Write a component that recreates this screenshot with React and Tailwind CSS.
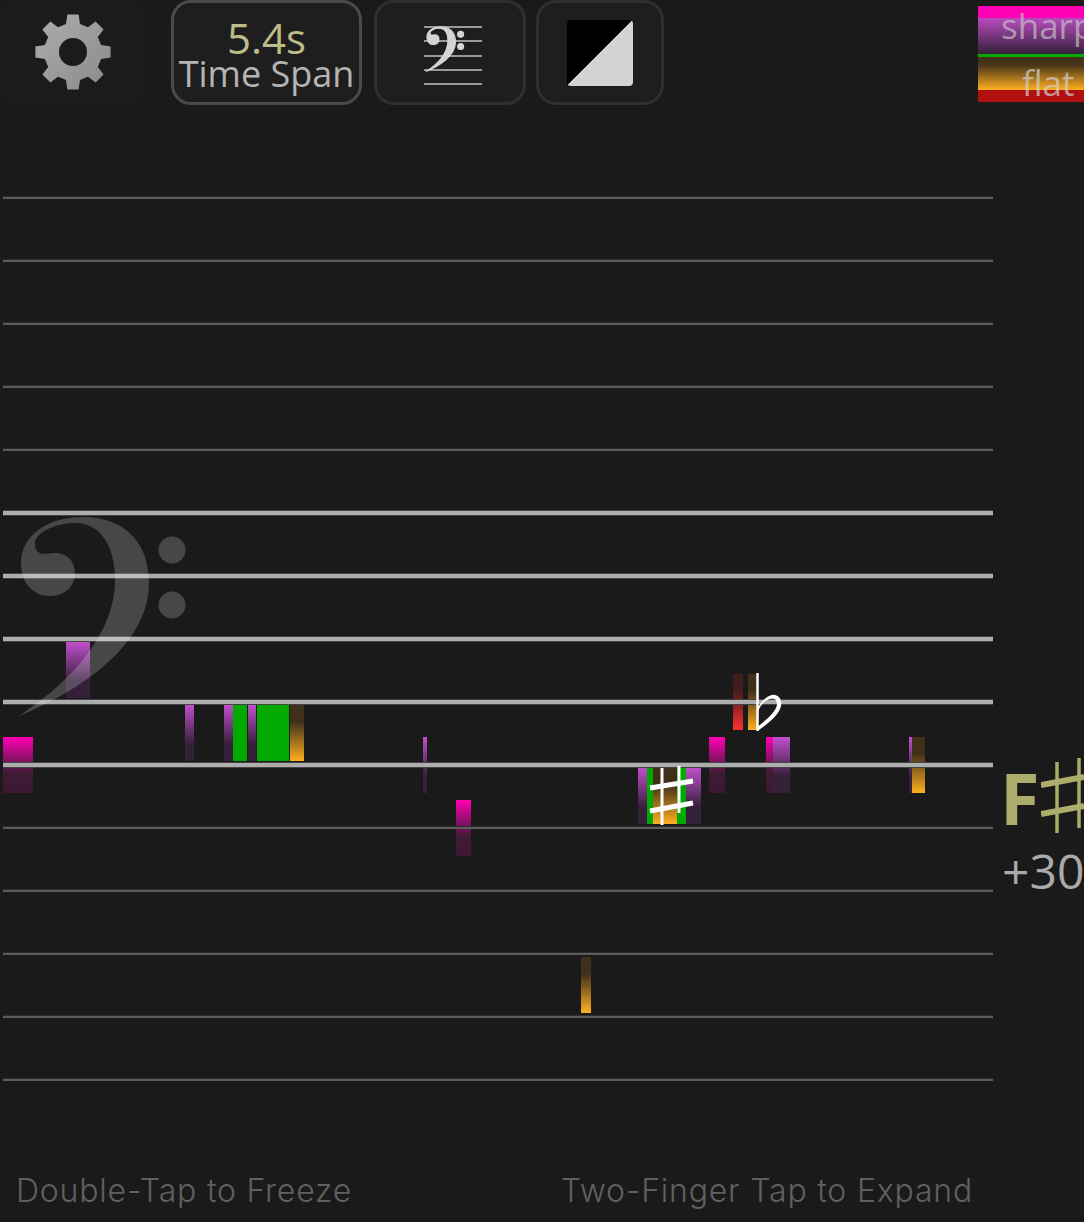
import React from "react";

const CLEF =
  "M17,717 C70,695 149,650 149,583 C149,540 122,517 83,517 C48,517 21,535 21,563 C21,583 33,596 50,596 C65,596 75,586 75,573 C75,560 66,553 55,553 C47,553 35,558 35,543 C35,533 55,523 75,523 C100,523 115,545 115,580 C115,640 60,690 17,717 Z";

// notes sit on a free canvas, coordinates are the content here
const NOTES = [
  { x: 3, w: 30, y: 737, kind: "magenta" },
  { x: 66, w: 24, y: 642, kind: "purple" },
  { x: 185, w: 9, y: 705, kind: "purple" },
  { x: 224, w: 9, y: 705, kind: "purple" },
  { x: 233, w: 14, y: 705, kind: "green" },
  { x: 248, w: 8, y: 705, kind: "purple" },
  { x: 257, w: 32, y: 705, kind: "green" },
  { x: 290, w: 14, y: 705, kind: "amber" },
  { x: 423, w: 4, y: 737, kind: "purple" },
  { x: 456, w: 15, y: 800, kind: "magenta" },
  { x: 581, w: 10, y: 957, kind: "amber" },
  { x: 638, w: 9, y: 768, kind: "purple" },
  { x: 647, w: 6, y: 768, kind: "green" },
  { x: 653, w: 24, y: 768, kind: "amber" },
  { x: 677, w: 9, y: 768, kind: "green" },
  { x: 686, w: 15, y: 768, kind: "purple" },
  { x: 709, w: 16, y: 737, kind: "magenta" },
  { x: 733, w: 10, y: 674, kind: "red" },
  { x: 748, w: 9, y: 674, kind: "amber" },
  { x: 766, w: 7, y: 737, kind: "magenta" },
  { x: 773, w: 17, y: 737, kind: "purple" },
  { x: 909, w: 3, y: 737, kind: "purple" },
  { x: 912, w: 13, y: 737, kind: "amber" },
];

const NOTE_CLASS = {
  magenta: "bg-linear-to-b/srgb from-[#ff00b4] via-[#3f1a35] via-[65%] to-[#3e1734]",
  purple: "bg-linear-to-b/srgb from-[#c050cc] via-[#35203a] via-[70%] to-[#35203a]",
  amber: "bg-linear-to-t/srgb from-[#ffb020] via-[#40301a] via-[70%] to-[#40301a]",
  red: "bg-linear-to-t/srgb from-[#ff3030] via-[#401c1c] via-[70%] to-[#401c1c]",
  green: "bg-[#00aa00]",
};

function gearPath() {
  const teeth = 8;
  const pts = [];
  for (let i = 0; i < teeth; i++) {
    const a = (i * Math.PI * 2) / teeth - Math.PI / 2;
    const step = Math.PI / teeth;
    [
      [-0.62, 29],
      [-0.38, 38],
      [0.38, 38],
      [0.62, 29],
    ].forEach(([k, r]) => {
      const t = a + k * step;
      pts.push(`${(40 + r * Math.cos(t)).toFixed(1)},${(40 + r * Math.sin(t)).toFixed(1)}`);
    });
  }
  return `M${pts.join(" L")} Z M54,40 A14,14 0 1,0 26,40 A14,14 0 1,0 54,40 Z`;
}

function Gear() {
  return (
    <svg viewBox="0 0 80 80" className="h-20 w-20">
      <defs>
        <linearGradient id="gear" x1="0" y1="0" x2="1" y2="1">
          <stop offset="0" stopColor="#adadad" />
          <stop offset="1" stopColor="#8a8a8a" />
        </linearGradient>
      </defs>
      <path d={gearPath()} fill="url(#gear)" fillRule="evenodd" />
    </svg>
  );
}

function Clef({ className, fill, stroke }) {
  return (
    <svg viewBox="17 513 170 206" className={className}>
      <path d={CLEF} fill={fill} stroke={stroke} strokeWidth="5" />
      <circle cx="172" cy="550" r="13.5" fill={fill} stroke={stroke} strokeWidth="5" />
      <circle cx="172" cy="605" r="13.5" fill={fill} stroke={stroke} strokeWidth="5" />
    </svg>
  );
}

function SmallClefIcon() {
  return (
    <div className="relative ml-[6px] mt-[6px] flex h-[59px] w-[58px] flex-col justify-between">
      {[0, 1, 2, 3, 4].map((i) => (
        <div key={i} className="h-[2px] bg-[#999999]" />
      ))}
      <Clef className="absolute left-[2px] top-0 h-[46px] w-[38px] overflow-visible" fill="#d4d4d4" stroke="#d4d4d4" />
    </div>
  );
}

function Sharp({ className }) {
  return (
    <svg viewBox="0 0 50 64" className={className}>
      <g stroke="#ffffff" fill="none">
        <path d="M17 4 V61" strokeWidth="3" />
        <path d="M34 2 V49" strokeWidth="3" />
        <path d="M5 24 L48 17" strokeWidth="5" />
        <path d="M5 47 L48 39" strokeWidth="5" />
      </g>
    </svg>
  );
}

function NameSharp({ className }) {
  return (
    <svg viewBox="0 0 43 75" className={className}>
      <g stroke="#acac6c" fill="none">
        <path d="M16 4 V75" strokeWidth="3.5" />
        <path d="M38 0 V70" strokeWidth="3.5" />
        <path d="M0 27 L43 19" strokeWidth="6" />
        <path d="M0 56 L43 48" strokeWidth="6" />
      </g>
    </svg>
  );
}

function Flat({ className }) {
  return (
    <svg viewBox="0 0 27 60" className={className}>
      <path d="M1.5 0 V58" stroke="#ffffff" strokeWidth="2.5" fill="none" />
      <path
        d="M1.5 36 C6 26 14 21 19 22 C24 23 26 28 25 33 C23 43 10 52 1.5 58 L1.5 54 C10 47 21 38 21 31 C21 26 18 25 14 26 C9 27 4 32 1.5 40 Z"
        fill="#ffffff"
      />
    </svg>
  );
}

function StaffLines({ start, count, thick }) {
  const lines = [];
  for (let i = 0; i < count; i++) {
    lines.push(
      <div key={start + i} className={thick ? "h-[63px] pt-[29px]" : "h-[63px] pt-[30px]"}>
        <div
          className={
            thick
              ? "h-[6px] w-full border-y border-[#444444] bg-[#adadad]"
              : "h-[3px] w-full border-t border-[#2c2c2c] bg-[#5c5c5c]"
          }
        />
      </div>
    );
  }
  return lines;
}

export default function App() {
  return (
    <div
      className="relative h-[1222px] w-[1084px] overflow-hidden bg-[#1a1a1a]"
      style={{ fontFamily: '"Open Sans", sans-serif' }}
    >
      <div className="flex h-[105px] items-start">
        <div className="flex h-[105px] w-[146px] items-center justify-center rounded-2xl border border-[#1d1d1d] bg-[#1b1b1b] pb-[2px]">
          <Gear />
        </div>
        <div className="ml-[25px] flex h-[105px] w-[191px] flex-col items-center rounded-[20px] border-[3px] border-[#4a4a4a] bg-[#1e1e1e] pt-[14px]">
          <div className="text-[42px] leading-[42px] text-[#bcbc88]">5.4s</div>
          <div className="whitespace-nowrap text-[36px] leading-[30px] text-[#b4b4b4]">Time Span</div>
        </div>
        <div className="ml-[12px] flex h-[105px] w-[152px] items-center justify-center rounded-[20px] border-[3px] border-[#2f2f2f] bg-[#1e1e1e]">
          <SmallClefIcon />
        </div>
        <div className="ml-[10px] flex h-[105px] w-[128px] items-center justify-center rounded-[20px] border-[3px] border-[#2f2f2f] bg-[#1e1e1e]">
          <div
            className="h-[66px] w-[66px] rounded-[4px] bg-black"
            style={{ backgroundImage: "linear-gradient(to bottom right, #000 50%, #d2d2d2 50%)" }}
          />
        </div>
        <div className="relative ml-auto mt-[6px] h-[96px] w-[106px] overflow-hidden">
          <div className="h-[12px] bg-[#ff00b4]" />
          <div className="h-[36px] bg-linear-to-b/srgb from-[#b84cc0] to-[#35203a]" />
          <div className="h-[3px] bg-[#00aa00]" />
          <div className="h-[33px] bg-linear-to-b/srgb from-[#40301a] via-[#4a361a] via-[25%] to-[#ffb020]" />
          <div className="h-[12px] bg-[#b01010]" />
          <div className="absolute left-[23px] top-0 text-[35px] leading-[40px] text-[#c8c0c8]/70">sharp</div>
          <div className="absolute left-[44px] top-[57px] text-[35px] leading-[40px] text-[#d0d0d0]/70">flat</div>
        </div>
      </div>

      <div className="relative z-10 mt-[61px] h-[945px]">
        <div className="flex w-[993px] flex-col pl-[3px]">
          <StaffLines start={0} count={5} thick={false} />
          <StaffLines start={5} count={5} thick={true} />
          <StaffLines start={10} count={5} thick={false} />
        </div>
      </div>

      {NOTES.map((n) => (
        <div
          key={`${n.x}-${n.y}`}
          className={`absolute h-[56px] ${NOTE_CLASS[n.kind]}`}
          style={{ left: n.x, top: n.y, width: n.w }}
        />
      ))}

      <Clef
        className="absolute left-[17px] top-[513px] z-20 h-[206px] w-[170px]"
        fill="rgba(255,255,255,0.2)"
      />
      <Sharp className="absolute left-[645px] top-[764px] z-20 h-[64px] w-[50px]" />
      <Flat className="absolute left-[756px] top-[673px] z-20 h-[60px] w-[27px]" />

      <div className="absolute left-[1000px] top-[752px] text-[72px] font-bold leading-[90px] text-[#acac6c]">F</div>
      <NameSharp className="absolute left-[1041px] top-[758px] h-[75px] w-[43px]" />
      <div className="absolute left-[1002px] top-[841px] whitespace-nowrap text-[48px] leading-[60px] text-[#aaaaaa]">+30</div>

      <div className="absolute inset-x-0 top-[1170px] flex font-['Inter',sans-serif] text-[32px] font-light leading-[42px] tracking-[0.8px] text-[#606060]">
        <div className="ml-[16px]">Double-Tap to Freeze</div>
        <div className="ml-auto mr-[111px]">Two-Finger Tap to Expand</div>
      </div>
    </div>
  );
}
